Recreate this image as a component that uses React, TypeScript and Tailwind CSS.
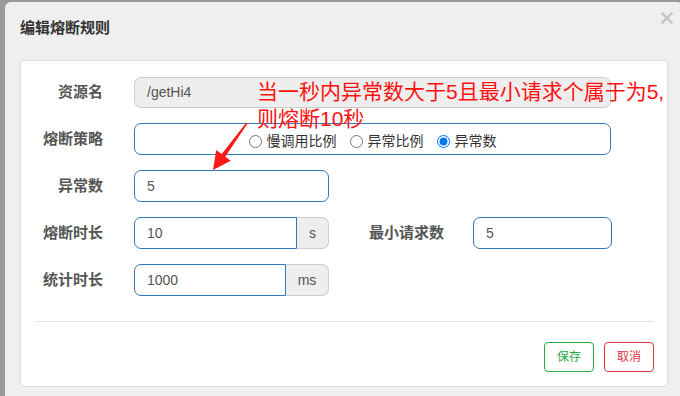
import * as React from "react"

function Label({ text, className = "w-[82px]" }: { text: string; className?: string }) {
  return (
    <div className={`${className} shrink-0 text-right text-[15px] leading-[20px] font-bold text-[#555]`}>
      {text}
    </div>
  )
}

function Radio({ text, checked = false }: { text: string; checked?: boolean }) {
  return (
    <label className="flex items-center">
      <input type="radio" readOnly checked={checked} className="m-0 h-[13px] w-[13px]" />
      <span className="ml-[5px] text-[14px] leading-[18px] text-[#333]">{text}</span>
    </label>
  )
}

export default function App() {
  return (
    <div className="relative h-[396px] w-[680px] overflow-hidden bg-[#999] pt-[2px] pl-[5px] font-['Liberation_Sans','Noto_Sans_CJK_SC',sans-serif]">
      <div className="relative h-[420px] w-[678px] rounded-t-[6px] bg-[#efefef] px-[15px]">
        {/* Header */}
        <div className="h-[58px] pt-[16px] text-[15px] leading-[20px] font-bold text-[#333]">编辑熔断规则</div>
        <button className="absolute right-[10px] top-[10px] text-[#c4c4c4]">
          <svg width="12" height="12" viewBox="0 0 12 12" fill="none" stroke="currentColor" strokeWidth="2.4" strokeLinecap="square">
            <path d="M1.5 1.5 10.5 10.5" />
            <path d="M10.5 1.5 1.5 10.5" />
          </svg>
        </button>

        {/* Body panel */}
        <div className="rounded-[4px] border border-[#ddd] bg-white">
          <div className="flex flex-col gap-[15px] pt-[15px]">
            <div className="flex h-[32px] items-center">
              <Label text="资源名" />
              <div className="ml-[31px] flex h-[31px] w-[477px] items-center rounded-[7px] border border-[#ccc] bg-[#eee] pl-[12px] text-[14px] text-[#555]">
                /getHi4
              </div>
            </div>

            <div className="flex h-[32px] items-center">
              <Label text="熔断策略" />
              <div className="ml-[31px] flex h-[32px] w-[477px] items-center justify-center gap-[13px] rounded-[7px] border border-[#3377bb] pt-[4px]">
                <Radio text="慢调用比例" />
                <Radio text="异常比例" />
                <Radio text="异常数" checked />
              </div>
            </div>

            <div className="flex h-[32px] items-center">
              <Label text="异常数" />
              <div className="ml-[31px] flex h-[32px] w-[195px] items-center rounded-[7px] border border-[#3377bb] pl-[12px] text-[14px] text-[#555]">
                5
              </div>
            </div>

            <div className="flex h-[32px] items-center">
              <Label text="熔断时长" />
              <div className="ml-[31px] flex h-[32px] w-[195px]">
                <div className="flex flex-1 items-center rounded-l-[7px] border border-[#3377bb] pl-[12px] text-[14px] text-[#555]">
                  10
                </div>
                <div className="flex w-[32px] items-center justify-center rounded-r-[7px] border border-l-0 border-[#ccc] bg-[#eee] text-[14px] text-[#555]">
                  s
                </div>
              </div>
              <Label text="最小请求数" className="w-[115px]" />
              <div className="ml-[29px] flex h-[32px] w-[139px] items-center rounded-[7px] border border-[#3377bb] pl-[12px] text-[14px] text-[#555]">
                5
              </div>
            </div>

            <div className="flex h-[32px] items-center">
              <Label text="统计时长" />
              <div className="ml-[31px] flex h-[32px] w-[195px]">
                <div className="flex flex-1 items-center rounded-l-[7px] border border-[#3377bb] pl-[12px] text-[14px] text-[#555]">
                  1000
                </div>
                <div className="flex w-[43px] items-center justify-center rounded-r-[7px] border border-l-0 border-[#ccc] bg-[#eee] text-[14px] text-[#555]">
                  ms
                </div>
              </div>
            </div>
          </div>

          <div className="mt-[25px] ml-[15px] mr-[13px] border-t border-[#e5e5e5]" />

          {/* Footer */}
          <div className="mr-[13px] flex justify-end gap-[10px] pt-[20px] pb-[14px]">
            <button className="h-[30px] w-[50px] rounded-[4px] border border-[#28a745] text-[12px] text-[#28a745]">保存</button>
            <button className="h-[30px] w-[50px] rounded-[4px] border border-[#dc3545] text-[12px] text-[#dc3545]">取消</button>
          </div>
        </div>
      </div>

      {/* Annotation */}
      <div className="absolute left-[257px] top-[78px] text-[21px] leading-[27px] text-[#ff1010]">
        <div>当一秒内异常数大于5且最小请求个属于为5,</div>
        <div>则熔断10秒</div>
      </div>
      <svg className="absolute left-[205px] top-[118px]" width="50" height="58" viewBox="0 0 50 58">
        <polygon
          points="8,52 11.2,32.1 16.7,36.1 41.4,4.5 42.6,5.5 20.3,38.7 25.8,42.7"
          fill="#ff1a1a"
        />
      </svg>
    </div>
  )
}
